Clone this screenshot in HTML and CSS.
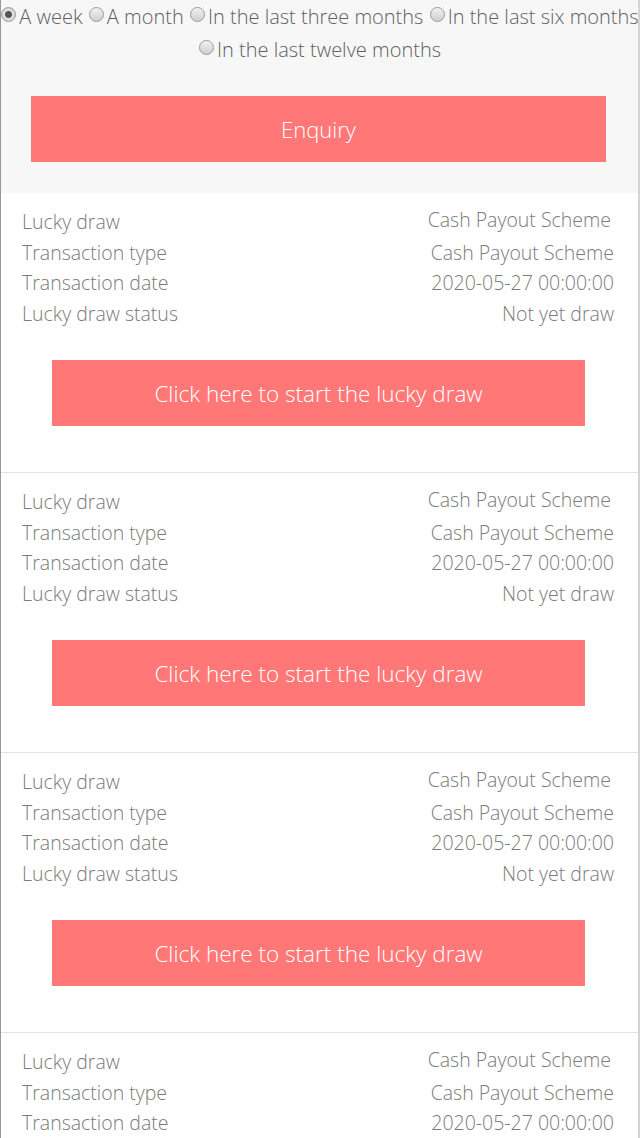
FILE: index.html
```html
<!DOCTYPE html>
<html lang="en">
<head>
  <meta charset="UTF-8">
  <title>Lucky Draw</title>
  <link rel="stylesheet" href="styles.css">
</head>
<body>
<div class="page">
  <div class="search-box">
    <div class="periods">
      <label class="period"><input type="radio" name="period" checked>A week</label>
      <label class="period"><input type="radio" name="period">A month</label>
      <label class="period"><input type="radio" name="period">In the last three months</label>
      <label class="period"><input type="radio" name="period">In the last six months</label>
      <label class="period"><input type="radio" name="period">In the last twelve months</label>
    </div>
    <button type="button" class="btn enquiry">Enquiry</button>
  </div>

  <div class="record">
    <div class="row"><span class="key">Lucky draw</span><span class="val first">Cash Payout Scheme</span></div>
    <div class="row"><span class="key">Transaction type</span><span class="val">Cash Payout Scheme</span></div>
    <div class="row"><span class="key">Transaction date</span><span class="val">2020-05-27 00:00:00</span></div>
    <div class="row"><span class="key">Lucky draw status</span><span class="val">Not yet draw</span></div>
    <button type="button" class="btn draw">Click here to start the lucky draw</button>
  </div>

  <div class="record">
    <div class="row"><span class="key">Lucky draw</span><span class="val first">Cash Payout Scheme</span></div>
    <div class="row"><span class="key">Transaction type</span><span class="val">Cash Payout Scheme</span></div>
    <div class="row"><span class="key">Transaction date</span><span class="val">2020-05-27 00:00:00</span></div>
    <div class="row"><span class="key">Lucky draw status</span><span class="val">Not yet draw</span></div>
    <button type="button" class="btn draw">Click here to start the lucky draw</button>
  </div>

  <div class="record">
    <div class="row"><span class="key">Lucky draw</span><span class="val first">Cash Payout Scheme</span></div>
    <div class="row"><span class="key">Transaction type</span><span class="val">Cash Payout Scheme</span></div>
    <div class="row"><span class="key">Transaction date</span><span class="val">2020-05-27 00:00:00</span></div>
    <div class="row"><span class="key">Lucky draw status</span><span class="val">Not yet draw</span></div>
    <button type="button" class="btn draw">Click here to start the lucky draw</button>
  </div>

  <div class="record">
    <div class="row"><span class="key">Lucky draw</span><span class="val first">Cash Payout Scheme</span></div>
    <div class="row"><span class="key">Transaction type</span><span class="val">Cash Payout Scheme</span></div>
    <div class="row"><span class="key">Transaction date</span><span class="val">2020-05-27 00:00:00</span></div>
    <div class="row"><span class="key">Lucky draw status</span><span class="val">Not yet draw</span></div>
    <button type="button" class="btn draw">Click here to start the lucky draw</button>
  </div>
</div>
</body>
</html>
```

FILE: styles.css
```css
body {
  margin: 0;
  padding: 0;
  font-family: "Open Sans", Arial, sans-serif;
  font-weight: 300;
  background-color: #fff;
  overflow: hidden;
}

.page {
  width: 637px;
  border-left: 1px solid #999;
  border-right: 2px solid #d4d4d4;
  min-height: 1138px;
}

.search-box {
  background-color: #f7f7f7;
  padding-bottom: 31px;
}

.periods {
  text-align: center;
  font-size: 20px;
  line-height: 33px;
  color: #5f5f5f;
  margin: 0 -6px;
}

.period {
  white-space: nowrap;
}

.period input[type="radio"] {
  -webkit-appearance: none;
  appearance: none;
  width: 15px;
  height: 15px;
  margin: 0 3px 0 1px;
  border: 1px solid #9a9a9a;
  border-radius: 50%;
  background: linear-gradient(#f2f2f2, #cfcfcf);
  vertical-align: -1px;
  position: relative;
  top: -3px;
}

.period input[type="radio"]:checked {
  background: radial-gradient(circle, #555 0, #555 3px, #e4e4e4 4px, #cfcfcf 7px);
}

.btn {
  display: block;
  height: 66px;
  border: none;
  background-color: #ff7777;
  color: #fff;
  font-family: "Open Sans", Arial, sans-serif;
  font-weight: 300;
  font-size: 22.5px;
  cursor: pointer;
}

.enquiry {
  width: 575px;
  margin: 30px 0 0 30px;
  font-size: 22px;
}

.record {
  padding: 14px 24px 46px 21px;
  border-bottom: 1px solid #dfe3ea;
}

.row {
  display: flex;
  justify-content: space-between;
  height: 30.5px;
  line-height: 30.5px;
  font-size: 19.5px;
  color: #7a7a7a;
}

.val.first {
  position: relative;
  top: -2px;
  margin-right: 3px;
}

.draw {
  width: 533px;
  margin: 31px 0 0 30px;
}
```
